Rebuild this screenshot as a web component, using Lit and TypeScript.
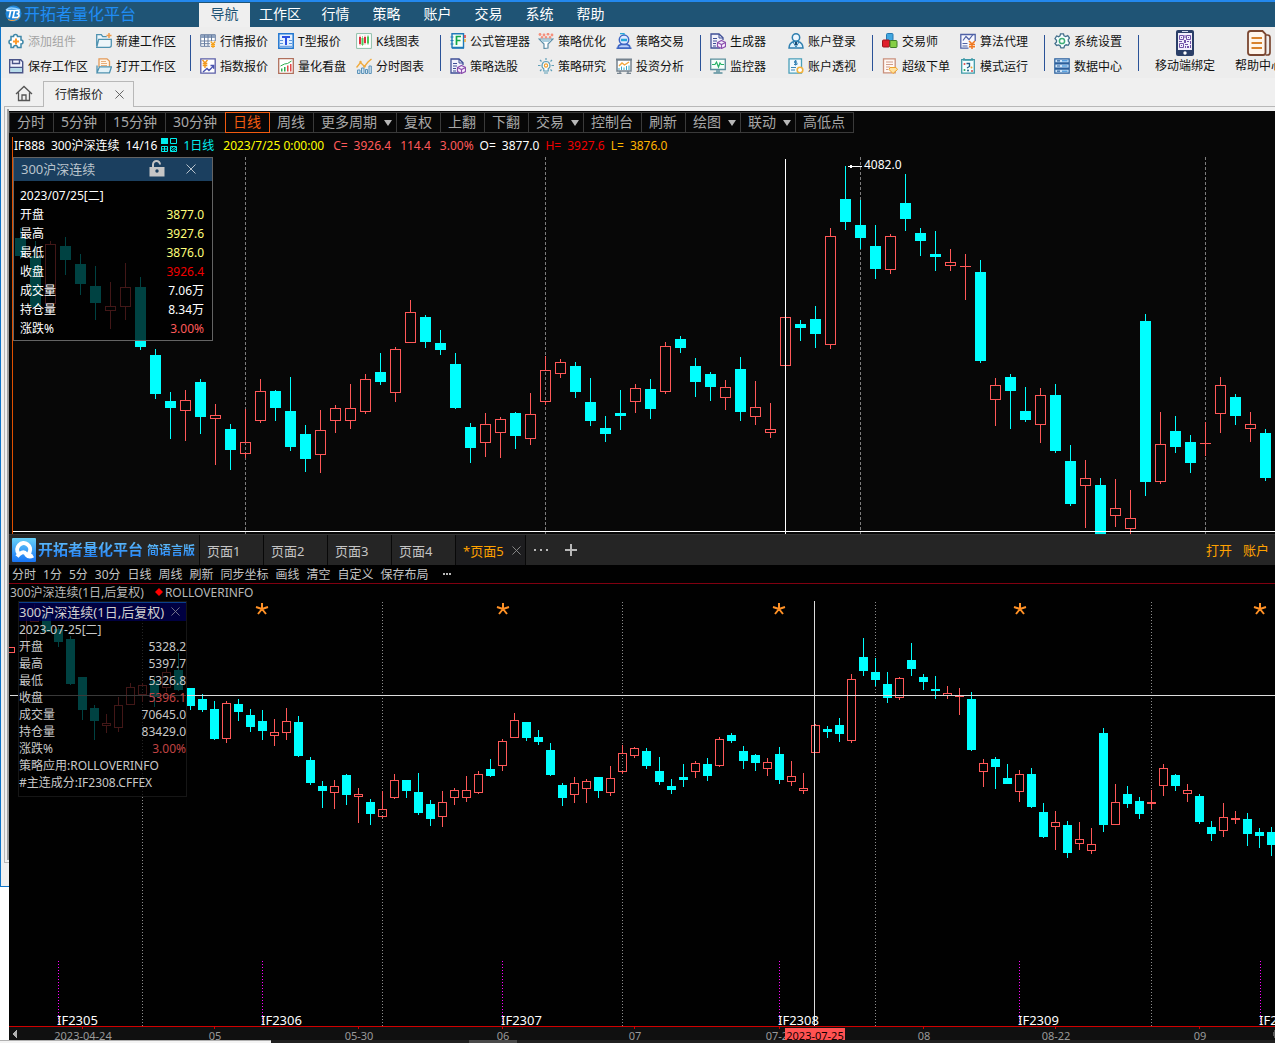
import { LitElement, html, svg, css, nothing } from "lit";
import { customElement, property } from "lit/decorators.js";
import { classMap } from "lit/directives/class-map.js";

/* ---------- icons ---------- */

const ICONS: Record<string, unknown> = {
  addWidget: svg`<path d="M3 3.500h2.500a2 2 0 1 1 4 0H13v3.500a2 2 0 1 1 0 4V14.500H9.500a2 2 0 1 0-4 0H3V11a2 2 0 1 1 0-4z" fill="#fff" stroke="#3f87a8" stroke-width="1.500"/><path d="M8 5.500v6M5 8.500h6" stroke="#ff9a2a" stroke-width="2"/>`,
  newWorkspace: svg`<path d="M.7 13V1.700h4.600l1.400 2h4M.7 14.300l2-8h12.600v6q0 2-2 2z" fill="#eef6fa" stroke="#4f92b0" stroke-width="1.300"/><path d="M13 0v5M10.500 2.500h5" stroke="#ee9a4a" stroke-width="1.500"/>`,
  save: svg`<path d="M1.700 1.700h11l2 2v11H1.700z" fill="#f4f4ff" stroke="#4a5488" stroke-width="1.400"/><path d="M4.500 2v3.500h7V2M2 9.500h12.500" fill="none" stroke="#4a5488" stroke-width="1.400"/><path d="M2.500 10h11.500v4H2.500z" fill="#b8dcea"/>`,
  openWorkspace: svg`<path d="M3 9V.8h8l2.500 2.500V9" fill="#fff5e8" stroke="#e29a5a" stroke-width="1.300"/><path d="M5 3.500h5M5 5.500h6M5 7.500h6" stroke="#e8ae7a"/><path d="M1 14.800V7.500M1 14.800h12.500l2-6H3.500z" fill="#e3f2f8" stroke="#4f92b0" stroke-width="1.300"/>`,
  quoteTable: svg`<path d="M.7 1.700h14.600v11.600H.7z" fill="#fff" stroke="#687ea0"/><path d="M1 2h14v3H1z" fill="#8fa3c0"/><path d="M1 8h14M1 10.700h14M4.500 2v11M8 2v11M11.500 2v11" stroke="#687ea0"/><path d="M10 8h6v7h-6z" fill="#efefef"/><path d="M10.700 8.500 13 11l2.300-2.500M13 11v4M11 11.700h4M11 13.300h4" fill="none" stroke="#f6a21c" stroke-width="1.200"/>`,
  tQuote: svg`<path d="M.8.8h14.400v14.400H.8z" fill="#e4f0ff" stroke="#2277d0" stroke-width="1.500"/><path d="M4 4h8M8 4v8" stroke="#2b50e0" stroke-width="2"/><path d="M2 7.500h3M2 10.500h3M2 13.300h12M11 7.500h3M11 10.500h3" stroke="#5a94dc"/>`,
  kChart: svg`<path d="M.6.6h14.800v14.800H.6z" fill="#fff" stroke="#8fbfa8"/><path d="M3 4h2v7H3zM8 4h2v6H8z" fill="#e03040"/><path d="M5.500 5h2v7h-2zM11 3.500h2v7h-2z" fill="#4cc85a"/><path d="M4 2.500v10M9 2.500v9" stroke="#e03040" stroke-width=".600"/><path d="M6.500 3v10M12 2v10" stroke="#4cc85a" stroke-width=".600"/>`,
  indexQuote: svg`<path d="M.8.8h14.400v14.400H.8z" fill="#fff" stroke="#5b5fa8" stroke-width="1.300"/><path d="M2.500 2 5 5l2.500-3M5 5v5M2.700 5.500h4.600M2.700 7.500h4.600" fill="none" stroke="#f09a20" stroke-width="1.400"/><path d="m3 14 4-3.500 2 2L13.500 8M10.500 7.500h3.200v3.200" fill="none" stroke="#4b55b0" stroke-width="1.400"/>`,
  quantBoard: svg`<path d="M.7.7h14.600v14.600H.7z" fill="#fff" stroke="#b0705c" stroke-width="1.300"/><path d="M3 13.500v-3h1.500v3zM6 13.500V9h1.500v4.500z" fill="#2fae52"/><path d="M9 13.500V7.500h1.500v6zM12 13.500V6h1.500v7.500z" fill="#e04a4a"/><path d="m2.500 8 4-2 3-.5L13.500 3" fill="none" stroke="#2fae52"/>`,
  tickChart: svg`<path d="M1.500 15.500V12H4v3.500zM5.500 15.500V10H8v5.500zM9.500 15.500V11.500h2v4zM13 15.500V8h2.300v7.500z" fill="#cfe4f4" stroke="#5c93b8"/><path d="m.5 9.500 4-5 4 4 3.500-4.500 3.500-3" fill="none" stroke="#f0aa3c" stroke-width="1.400"/><circle cx="4.500" cy="4" r="1.200" fill="#f0aa3c"/><circle cx="8.500" cy="8.500" r="1.200" fill="#f0aa3c"/>`,
  formula: svg`<path d="M2 .8h11.500v13.700H2z" fill="#f4fff8" stroke="#1f7ab8" stroke-width="1.400"/><path d="M.5 4h3M.5 7.500h3M.5 11h3" stroke="#1f7ab8" stroke-width="1.200"/><path d="M6.500 12V3.500H11M6.500 7.500h4" fill="none" stroke="#12a84a" stroke-width="1.700"/><path d="M15 2v3" stroke="#e03838" stroke-width="1.500"/><path d="M15 6v3" stroke="#f3a62a" stroke-width="1.500"/><path d="M2 15.300h12" stroke="#1f7ab8"/>`,
  funnel: svg`<path d="M1 6h14l-5 5v4l-4 .5V11z" fill="#fff" stroke="#5f8fa8" stroke-width="1.200"/><path d="M3 7h10l-2 2H5z" fill="#a9cfe0"/><circle cx="2" cy="1.500" r="1.400" fill="#f5907c"/><circle cx="6" cy="2" r="1.400" fill="#f5907c"/><circle cx="10" cy="1.200" r="1.400" fill="#f5907c"/><circle cx="14" cy="2" r="1.400" fill="#f5907c"/><circle cx="4" cy="4.300" r="1.200" fill="#f5907c"/><circle cx="8" cy="4.300" r="1.200" fill="#f5907c"/><circle cx="12" cy="4.300" r="1.200" fill="#f5907c"/>`,
  robot: svg`<circle cx="8" cy="6.800" r="4.700" fill="#dfe9ff" stroke="#3e66c4" stroke-width="1.500"/><path d="M5 7h6" stroke="#26a6d8" stroke-width="2.500"/><path d="M8 2V.5H4" fill="none" stroke="#26a6d8" stroke-width="1.300"/><path d="M2 15q0-3 3-3.500h6q3 .5 3 3.500zM.5 15.200h15" fill="#bcd0f8" stroke="#3e66c4" stroke-width="1.400"/>`,
  docCube: svg`<path d="M10 15H1V1h8l4 3.700V7" fill="#f1f1fb" stroke="#3f4f96" stroke-width="1.300"/><path d="M9 1v4h4M3 5.500h4M3 8h4M3 10.500h3M3 13h3" fill="none" stroke="#3f4f96"/><path d="m11.500 7.500 4 2v4l-4 2-4-2v-4zM7.500 9.500l4 2 4-2M11.500 11.500v4" fill="#fbefff" stroke="#8b4fae" stroke-width="1.200"/>`,
  bulb: svg`<path d="M8 3.500a4 4 0 0 1 2.200 7.300V13H5.800v-2.200A4 4 0 0 1 8 3.500z" fill="#fff" stroke="#5f9fb8" stroke-width="1.200"/><path d="M6 15h4M8 0v2M2 2l1.500 1.500M14 2l-1.500 1.500M0 7.500h2.500M16 7.500h-2.500M2 13l1.500-1.500M14 13l-1.500-1.500" stroke="#5f9fb8" stroke-width="1.200"/><circle cx="8" cy="7.500" r="1.600" fill="#fff" stroke="#f0a030" stroke-width="1.200"/>`,
  invest: svg`<path d="M0 1.500h16" stroke="#75838f" stroke-width="2"/><path d="M1 2h14v11H1z" fill="#fff" stroke="#75838f" stroke-width="1.500"/><path d="m3 8 3-3 2.500 2L13 4" fill="none" stroke="#f2a63c" stroke-width="1.400"/><path d="M3 10v2M5.500 8.500v3.500M8 9.500v2.500M10.500 8v4M13 7.500v4.500" stroke="#39a9c9"/><path d="M4 13v2.500M12 13v2.500M1 15.300h4.500M10.500 15.300h4.500" stroke="#75838f" stroke-width="1.300"/>`,
  monitor: svg`<path d="M.7 1.200h14.600v10.300H.7z" fill="#f6fffb" stroke="#5a8f9c" stroke-width="1.300"/><path d="M2 6.500h3l1.500-2.500 2 5L10 5l1.200 1.500H14" fill="none" stroke="#25b267" stroke-width="1.200"/><path d="M6 12h4v2.500H6z" fill="#7fa8b2"/><path d="M3.500 15h9" stroke="#5a8f9c" stroke-width="1.500"/>`,
  user: svg`<circle cx="8" cy="4.500" r="3.700" fill="#eef7ff" stroke="#2f7fb0" stroke-width="1.500"/><path d="M1 15q0-5 5-6.500h4q5 1.500 5 6.500z" fill="#e3f2fc" stroke="#2f7fb0" stroke-width="1.500"/><path d="M8 9v3" stroke="#204a70" stroke-width="2"/><path d="m5 9 3 5 3-5" fill="none" stroke="#2f7fb0"/>`,
  userDoc: svg`<path d="M1 .8h12.500v14.400H1z" fill="#f1faff" stroke="#4b9fb8" stroke-width="1.300"/><path d="M7.500 2v5.500M9 3.200H6.500v1.600H9v1.700H6M3 9.500h5M3 12h4" fill="none" stroke="#3a86b8"/><circle cx="12" cy="12" r="2.800" fill="#fff" stroke="#f2b23c" stroke-width="1.600"/>`,
  cubes: svg`<rect x="4.500" y=".5" width="6.500" height="7" rx="1" fill="#41a7e0" stroke="#2679b0"/><rect x=".5" y="7" width="7" height="7" rx="1" fill="#e0202c" stroke="#9c141c"/><rect x="8" y="7.500" width="7" height="7" rx="1" fill="#86cf46" stroke="#3f7d28"/>`,
  trader: svg`<path d="M1.500.8h11.700v14H1.500z" fill="#fff8f4" stroke="#c9907c" stroke-width="1.300"/><path d="M4 4h7M4 6.500h7M4 9h4M4 11.500h2" stroke="#d09c8a"/><path d="M8 9.500h6l1.500 2-4.500 4-4-4z" fill="#ffe2a0" stroke="#eea22c"/>`,
  algo: svg`<path d="M.8 1.500h14.400v13.700H.8z" fill="#f7f8ff" stroke="#4f62a6" stroke-width="1.300"/><path d="m3 7.500 3-4 3 3 4-5" fill="none" stroke="#4f62a6" stroke-width="1.200"/><path d="M2.500 10.500h5M2.500 13h5" stroke="#4f62a6"/><path d="M8.500 8H16v8H8.500z" fill="#f4f4f4"/><path d="M9 8l3 3 3-3M12 11v5M9 11.500h6M9 13.700h6" fill="none" stroke="#f07820" stroke-width="1.500"/>`,
  modeRun: svg`<path d="M1.700 1.700h12.600v13.500H1.700z" fill="#f4feff" stroke="#3f9aa8" stroke-width="1.300"/><path d="M4 0v3M12 0v3M5 2h6" stroke="#3f9aa8" stroke-width="1.300"/><path d="M6.500 5.500h3v3L7 10" fill="none" stroke="#245f86" stroke-width="1.300"/><circle cx="4.500" cy="6" r="1" fill="#e04a4a"/><circle cx="11.500" cy="9.500" r="1" fill="#f0a030"/><circle cx="4.500" cy="12" r="1" fill="#29a85c"/><circle cx="8" cy="12.500" r="1" fill="#245f86"/><circle cx="12" cy="13" r="1" fill="#e04a4a"/>`,
  gear: svg`<path d="M6.500.8h3l.5 2 1.700.8 2-1 1.800 2.400-1.300 1.600.2 1.800 1.300 1.300-1.500 2.600-2-.5-1.600 1-.7 2h-3l-.8-2-1.500-.9-2 .5L1 10.500l1.500-1.500V7.200L1 5.600 2.600 3l2 .7L6 2.800z" fill="#f7ffff" stroke="#44708c" stroke-width="1.300"/><circle cx="8" cy="8" r="2.600" fill="#fff" stroke="#3fae78" stroke-width="1.500"/>`,
  server: svg`<path d="M.8.8h14.400v4H.8zM.8 6h14.400v4H.8zM.8 11.200h14.400v4H.8z" fill="#cfe6fa" stroke="#2a5f9c" stroke-width="1.200"/><path d="M3 2.800h3M3 8h3M3 13.200h3" stroke="#2a5f9c" stroke-width="1.200"/><path d="M8 2.800h5.500M8 8h5.500M8 13.200h5.500" stroke="#5aa2e0" stroke-width="1.500"/>`,
};

const icon = (name: string) =>
  html`<svg class="icon" viewBox="0 0 16 16" aria-hidden="true">${ICONS[name]}</svg>`;

const crossIcon = html`<svg class="cross" viewBox="0 0 10 10" aria-hidden="true"><path d="M.5.500l9 9M9.500.500l-9 9" stroke="currentColor" fill="none" /></svg>`;

const phoneIcon = html`<svg class="big-icon" viewBox="0 0 26 26" aria-hidden="true">
  <rect x="4" y="0" width="18" height="26" rx="2" fill="#2b3f68" />
  <path d="M6 3h14v17H6z" fill="#f2eefb" />
  <path d="M10 1.500h6" stroke="#d0d8e8" />
  <circle cx="13" cy="23" r="1.700" fill="#fff" />
  <path d="M7.500 5.500h4v4h-4zM14.500 5.500h4v4h-4zM7.500 13.500h4v4h-4z" fill="none" stroke="#7253a8" />
  <path d="M9 7h1v1H9zM16 7h1v1h-1zM9 15h1v1H9zM12.500 5h1v3h-1zM7 11h3v1H7zM12 10h2v3h-2zM15 11h2v1h-2zM18 11h1v3h-1zM13 14h3v1h-3zM13 16h1v2h-1zM15 16h2v2h-2zM18 15h1v3h-1z" fill="#7253a8" />
</svg>`;

const docsIcon = html`<svg class="big-icon" viewBox="0 0 26 26" aria-hidden="true">
  <path d="M20 5h1.500q2.500 0 2.500 2.500v15q0 2.500-2.500 2.500h-2" fill="none" stroke="#7a4630" stroke-width="1.700" />
  <path d="M4.500 1h12l3 3v18.500q0 2.500-2.500 2.500H4.500Q2 25 2 22.500v-19Q2 1 4.500 1z" fill="#fff6ec" stroke="#7a4630" stroke-width="1.800" />
  <path d="M5.500 8h10.500M5.500 13h10.500M5.500 18h10.500" stroke="#d8822c" stroke-width="1.800" />
</svg>`;

/* ---------- chart data: [rising, high, body top, body bottom, low] ---------- */

type Candle = [0 | 1, number, number, number, number];

const DAILY: Candle[] = [
  [0, 228, 238, 256, 259], [0, 241, 256, 307, 308], [1, 241, 244, 304, 305], [0, 237, 246, 260, 275],
  [0, 254, 264, 284, 295], [0, 266, 286, 303, 320], [1, 282, 306, 311, 329], [1, 263, 287, 307, 320],
  [0, 277, 287, 347, 350], [0, 349, 355, 394, 399], [0, 392, 401, 408, 439], [1, 390, 400, 411, 441],
  [0, 379, 382, 417, 434], [1, 404, 415, 419, 465], [0, 424, 429, 450, 470], [1, 409, 442, 454, 458],
  [1, 379, 391, 421, 423], [0, 390, 391, 408, 421], [0, 377, 411, 447, 451], [0, 425, 434, 459, 472],
  [1, 410, 430, 455, 473], [1, 405, 408, 421, 433], [1, 384, 408, 421, 429], [1, 374, 379, 412, 414],
  [0, 353, 372, 382, 385], [1, 347, 349, 393, 402], [1, 300, 312, 343, 343], [0, 315, 317, 342, 348],
  [0, 330, 343, 350, 355], [0, 353, 364, 408, 409], [0, 423, 427, 448, 463], [1, 413, 424, 443, 457],
  [1, 417, 419, 433, 458], [0, 412, 413, 436, 449], [1, 393, 414, 439, 445], [1, 356, 370, 402, 405],
  [1, 359, 362, 374, 378], [0, 362, 366, 392, 398], [0, 378, 402, 421, 426], [0, 416, 428, 434, 442],
  [0, 390, 413, 416, 430], [1, 384, 388, 402, 413], [0, 379, 389, 409, 419], [1, 342, 346, 392, 394],
  [0, 336, 339, 348, 353], [0, 358, 366, 382, 397], [0, 372, 374, 387, 401], [1, 380, 387, 398, 410],
  [0, 357, 369, 412, 421], [1, 381, 407, 417, 425], [1, 403, 429, 433, 438], [1, 317, 317, 366, 366],
  [0, 320, 324, 328, 341], [0, 306, 319, 334, 348], [1, 228, 236, 345, 349], [0, 166, 199, 222, 230],
  [0, 200, 225, 238, 249], [0, 225, 246, 269, 279], [1, 234, 236, 270, 274], [0, 174, 203, 219, 231],
  [0, 228, 233, 241, 256], [0, 231, 254, 257, 271], [1, 249, 262, 266, 271], [1, 254, 266, 267, 300],
  [0, 260, 272, 361, 363], [1, 378, 385, 400, 426], [0, 374, 377, 391, 429], [0, 387, 411, 420, 422],
  [1, 388, 395, 425, 443], [0, 384, 395, 451, 453], [0, 445, 461, 504, 506], [1, 460, 478, 486, 528],
  [0, 478, 485, 535, 535], [1, 479, 508, 516, 527], [1, 490, 518, 529, 534], [0, 314, 321, 482, 496],
  [1, 412, 444, 482, 484], [0, 416, 431, 447, 453], [0, 435, 442, 463, 473], [1, 422, 443, 444, 456],
  [1, 377, 385, 414, 433], [0, 394, 397, 416, 425], [1, 412, 424, 429, 442], [0, 429, 433, 478, 481],
];

const ADJUSTED: Candle[] = [
  [1, 647, 647, 653, 653], [1, 615, 615, 648, 648], [1, 604, 610, 622, 622], [0, 610, 613, 632, 632],
  [0, 627, 629, 642, 647], [0, 636, 639, 684, 685], [0, 677, 677, 710, 720], [0, 705, 708, 721, 740],
  [1, 714, 723, 726, 733], [1, 697, 705, 728, 732], [1, 683, 687, 705, 705], [1, 683, 685, 695, 702],
  [0, 677, 681, 697, 707], [1, 668, 672, 688, 692], [0, 653, 670, 690, 691],
  [0, 688, 688, 706, 710], [0, 694, 699, 710, 712], [0, 701, 709, 739, 740], [1, 701, 703, 739, 743],
  [0, 699, 704, 712, 721], [0, 709, 715, 727, 732], [0, 710, 721, 731, 740], [1, 719, 732, 736, 746],
  [1, 708, 721, 733, 740], [0, 716, 722, 756, 757], [0, 757, 760, 783, 785], [0, 781, 786, 791, 808],
  [1, 780, 786, 793, 809], [0, 774, 775, 795, 805], [1, 788, 794, 797, 823], [0, 799, 802, 814, 825],
  [1, 791, 809, 817, 818], [1, 774, 780, 798, 799], [0, 780, 780, 791, 798], [0, 773, 792, 813, 815],
  [0, 800, 804, 819, 826], [1, 791, 802, 817, 827], [1, 788, 790, 798, 805], [1, 776, 790, 798, 802],
  [1, 771, 774, 793, 794], [0, 759, 769, 776, 777], [1, 739, 741, 766, 771], [1, 713, 720, 738, 738],
  [0, 722, 722, 738, 741], [0, 730, 737, 742, 745], [0, 743, 750, 775, 776], [0, 783, 785, 798, 806],
  [1, 777, 783, 795, 803], [1, 779, 781, 789, 803], [0, 777, 777, 791, 798], [1, 766, 778, 793, 796],
  [1, 745, 753, 772, 774], [1, 747, 748, 756, 758], [0, 748, 751, 766, 769], [0, 757, 771, 782, 785],
  [0, 779, 786, 790, 794], [0, 764, 777, 780, 787], [1, 761, 763, 772, 778], [0, 758, 764, 776, 781],
  [1, 737, 739, 766, 767], [0, 733, 735, 741, 743], [0, 746, 751, 761, 769], [0, 754, 755, 763, 771],
  [1, 758, 762, 769, 776], [0, 747, 754, 780, 784], [1, 761, 776, 782, 786], [1, 773, 788, 791, 794],
  [1, 724, 725, 753, 753], [0, 726, 729, 732, 738], [0, 718, 725, 734, 742], [1, 674, 679, 741, 743],
  [0, 638, 657, 671, 676], [0, 658, 672, 680, 686], [0, 672, 684, 698, 703], [1, 677, 678, 698, 700],
  [0, 643, 660, 669, 676], [0, 674, 677, 682, 690], [0, 676, 689, 691, 699], [1, 686, 693, 696, 699],
  [1, 688, 695, 697, 715], [0, 692, 699, 750, 751], [1, 759, 763, 772, 787], [0, 757, 759, 767, 789],
  [0, 764, 778, 784, 784], [1, 770, 774, 792, 802], [0, 768, 774, 807, 808], [0, 803, 812, 837, 838],
  [1, 811, 822, 827, 850], [0, 821, 825, 853, 858], [1, 822, 839, 844, 850], [1, 828, 844, 851, 854],
  [0, 728, 733, 825, 832], [1, 784, 802, 825, 825], [0, 786, 794, 804, 808], [0, 797, 801, 814, 819],
  [1, 790, 802, 804, 809], [1, 764, 768, 786, 796], [0, 774, 775, 786, 791], [1, 784, 790, 794, 802],
  [0, 794, 796, 822, 824], [0, 821, 827, 834, 841], [1, 803, 817, 831, 837], [1, 811, 818, 820, 824],
  [0, 813, 819, 834, 846], [0, 828, 832, 836, 848], [0, 827, 832, 845, 856],
];

const candle = (c: Candle, x: number, half: number) => {
  const [rising, high, top, bottom, low] = c;
  if (!rising) {
    return svg`<path fill="#00ffff" d="M${x} ${high}h1v${low - high}h-1zM${x - half} ${top}h${2 * half + 1}v${bottom - top}h-${2 * half + 1}z"/>`;
  }
  if (bottom - top < 3) {
    return svg`<path fill="#ff5858" d="M${x} ${high}h1v${low - high}h-1zM${x - half} ${top}h${2 * half + 1}v${bottom - top}h-${2 * half + 1}z"/>`;
  }
  return svg`<path fill="none" stroke="#ff5858" d="M${x + 0.5} ${high}V${top}M${x + 0.5} ${bottom}V${low}M${x - half + 0.5} ${top + 0.5}h${2 * half}v${bottom - top - 1}h-${2 * half}z"/>`;
};

@customElement("daily-chart")
export class DailyChart extends LitElement {
  static styles = css`
    :host { display: block; }
    .plot { display: block; width: 100%; height: 379px; shape-rendering: crispEdges; }
    .price { font: 12px "Noto Sans", "Noto Sans CJK SC", sans-serif; fill: #fff; }
  `;
  render() {
    return html`<svg class="plot" role="img" aria-label="300沪深连续 日线">
      <g transform="translate(-13 -155)">
        ${[245, 545, 860, 1205].map((x) => svg`<path d="M${x + 0.5} 157V534" stroke="#7c7c7c" stroke-dasharray="3 2"/>`)}
        ${DAILY.map((c, i) => candle(c, 20 + i * 15, 5))}
        <path d="M785.500 159V534M13 531.500H4000" stroke="#fff" fill="none" />
        <path d="M848 166.500h14M850 165.500h2M850 167.500h2" stroke="#fff" fill="none" />
        <text class="price" x="864" y="169">4082.0</text>
      </g>
    </svg>`;
  }
}

@customElement("adjusted-chart")
export class AdjustedChart extends LitElement {
  static styles = css`
    :host { display: block; }
    .plot { display: block; width: 100%; height: 440px; shape-rendering: crispEdges; }
    .contract { font: 13px "Noto Sans", sans-serif; fill: #fff; }
    .date { font: 11px "Noto Sans", sans-serif; fill: #999; text-anchor: middle; }
    .now { fill: #100; }
    .star { fill: none; stroke: #ff9126; stroke-width: 2; shape-rendering: auto; }
  `;
  render() {
    const contracts: [number, string][] = [
      [58, "IF2305"], [262, "IF2306"], [502, "IF2307"], [779, "IF2308"], [1019, "IF2309"], [1260, "IF2310"],
    ];
    const dates: [number, string][] = [
      [82, "2023-04-24"], [214, "05"], [358, "05-30"], [502, "06"], [634, "07"],
      [779, "07-20"], [923, "08"], [1055, "08-22"], [1199, "09"],
    ];
    return html`<svg class="plot" role="img" aria-label="300沪深连续 后复权">
      <g transform="translate(-9 -600)">
        <rect x="9" y="1027" width="100%" height="13" fill="#101010" />
        ${[142, 382, 622, 875, 1151].map((x) => svg`<path d="M${x + 0.5} 602V1026" stroke="#8c8c8c" stroke-dasharray="1 2"/>`)}
        ${ADJUSTED.map((c, i) => candle(c, 190 + Math.round((i - 15) * 12.013), 4))}
        ${[262, 503, 779, 1020, 1260].map(
          (x) => svg`<path class="star" d="M${x} 609V603M${x} 609l-6-2M${x} 609l6-2M${x} 609l-4 5M${x} 609l4 5"/>`
        )}
        <path d="M10 695.500H4000M814.500 601V1026" stroke="#dcdcdc" fill="none" />
        ${contracts.map(
          ([x, name]) => svg`<path d="M${x + 0.5} 961V1022" stroke="#ff00ff" stroke-dasharray="1 2"/>
            <text class="contract" x=${x - 1} y="1025">${name}</text>`
        )}
        <path d="M9 1026.500H4000" stroke="#d00000" />
        ${dates.map(
          ([x, label]) => svg`<path d="M${x + 0.5} 1027v2" stroke="#d00000"/>
            <text class="date" x=${x + 1} y="1040">${label}</text>`
        )}
        <rect x="785" y="1028" width="60" height="12" fill="#ff5252" />
        <text class="date now" x="815" y="1040">2023-07-25</text>
        <path d="M17 1030v8l-5-4z" fill="#b0b0b0" />
        <circle cx="1279" cy="1034" r="6" fill="#5a5a5a" />
      </g>
    </svg>`;
  }
}

/* ---------- floating data card ---------- */

type Row = [string, string, string];

@customElement("bar-card")
export class BarCard extends LitElement {
  static styles = css`
    :host { display: block; font: 12px "Noto Sans", "Noto Sans CJK SC", sans-serif; }
    .card { color: #fff; background: rgba(0, 0, 0, 0.74); border: 1px solid #646464; box-sizing: border-box; }
    .head { display: flex; align-items: center; box-sizing: border-box; height: 23px; padding: 0 16px 2px 7px; background: #1b3f5f; color: #b9c3cc; font-size: 13px; }
    .name { flex: 1; white-space: nowrap; }
    .lock { width: 16px; height: 17px; margin-right: 21px; display: block; }
    .close { display: block; padding: 0; border: 0; background: none; color: inherit; height: 10px; line-height: 0; }
    .cross { display: block; width: 10px; height: 10px; }
    .date { margin: 0; padding: 5px 6px 0; line-height: 19px; }
    .rows { margin: 0; padding: 0 8px 2px 6px; }
    .row { display: flex; justify-content: space-between; line-height: 19px; }
    .row dd { margin: 0; }
    .yellow { color: #ffff7a; }
    .red { color: #f00000; }
    .coral { color: #ff5a5a; }
    .dim { color: #c04444; }
    .note { margin: 0; line-height: 17px; white-space: nowrap; }
    .compact { color: #c8c8c8; border-color: #161616; padding-bottom: 5px; }
    .compact .head { height: 19px; padding: 0 6px 2px 0; background: rgba(0, 0, 92, 0.7); color: #d0d0d0; border-top: 1px solid #0a3f8c; }
    .compact .close { color: #7c7c90; }
    .compact .cross { width: 9px; height: 9px; }
    .compact .date { padding: 0; line-height: 17px; }
    .compact .rows { padding: 0; }
    .compact .row { line-height: 17px; }
  `;
  @property() name = "";
  @property() date = "";
  @property({ type: Boolean }) compact = false;
  @property({ attribute: false }) rows: Row[] = [];
  @property({ attribute: false }) notes: string[] = [];

  render() {
    return html`<section class=${classMap({ card: true, compact: this.compact })}>
      <header class="head">
        <span class="name">${this.name}</span>
        ${this.compact
          ? nothing
          : html`<svg class="lock" viewBox="0 0 16 17" aria-hidden="true">
              <path d="M4 7V4.500a3.500 3.500 0 0 1 7 0" fill="none" stroke="#c6c6c6" stroke-width="2" />
              <path d="M.500 7h15v9.500H.500z" fill="#c6c6c6" />
              <circle cx="8" cy="11" r="1.700" fill="#1b3f5f" />
            </svg>`}
        <button class="close" type="button" aria-label="关闭">${crossIcon}</button>
      </header>
      <p class="date">${this.date}</p>
      <dl class="rows">
        ${this.rows.map(([label, value, tone]) => html`<div class="row"><dt>${label}</dt><dd class=${tone}>${value}</dd></div>`)}
      </dl>
      ${this.notes.map((n) => html`<p class="note">${n}</p>`)}
    </section>`;
  }
}

/* ---------- page ---------- */

interface RibbonColumn { wide?: boolean; items: [string, string][]; }

const RIBBON: RibbonColumn[][] = [
  [
    { wide: true, items: [["addWidget", "添加组件"], ["save", "保存工作区"]] },
    { wide: true, items: [["newWorkspace", "新建工作区"], ["openWorkspace", "打开工作区"]] },
  ],
  [
    { items: [["quoteTable", "行情报价"], ["indexQuote", "指数报价"]] },
    { items: [["tQuote", "T型报价"], ["quantBoard", "量化看盘"]] },
    { items: [["kChart", "K线图表"], ["tickChart", "分时图表"]] },
  ],
  [
    { wide: true, items: [["formula", "公式管理器"], ["docCube", "策略选股"]] },
    { items: [["funnel", "策略优化"], ["bulb", "策略研究"]] },
    { items: [["robot", "策略交易"], ["invest", "投资分析"]] },
  ],
  [
    { items: [["docCube", "生成器"], ["monitor", "监控器"]] },
    { items: [["user", "账户登录"], ["userDoc", "账户透视"]] },
  ],
  [
    { items: [["cubes", "交易师"], ["trader", "超级下单"]] },
    { items: [["algo", "算法代理"], ["modeRun", "模式运行"]] },
  ],
  [{ items: [["gear", "系统设置"], ["server", "数据中心"]] }],
];

const PERIODS: [string, boolean?][] = [
  ["分时"], ["5分钟"], ["15分钟"], ["30分钟"], ["日线"], ["周线"], ["更多周期", true], ["复权"], ["上翻"],
  ["下翻"], ["交易", true], ["控制台"], ["刷新"], ["绘图", true], ["联动", true], ["高低点"],
];

@customElement("app-root")
export class AppRoot extends LitElement {
  static styles = css`
    :host { display: block; overflow: hidden; background: #fff; color: #111; font: 12px "Noto Sans", "Noto Sans CJK SC", sans-serif; }
    button { font: inherit; color: inherit; background: none; border: 0; padding: 0; margin: 0; white-space: nowrap; }
    .icon { width: 16px; height: 16px; flex: none; display: block; }
    .cross { width: 9px; height: 9px; display: block; }

    .titlebar { display: flex; height: 25px; background: #1f5475; border-top: 2px solid #2388ee; }
    .brand { display: flex; align-items: center; gap: 2px; width: 194px; box-sizing: content-box; padding: 0 0 3px 5px; height: 22px; color: #1f8df5; font-size: 16px; white-space: nowrap; }
    .brand-mark { width: 17px; height: 17px; flex: none; }
    .menu { display: flex; color: #fff; font-size: 14px; padding-top: 1px; }
    .menu-item { min-width: 51px; padding: 0 9px 6px; height: 24px; }
    .menu-item.on { background: #efefef; color: #1f5475; }

    .ribbon { display: flex; align-items: center; height: 50px; padding: 1px 0 0 7px; background: #ededed; border-left: 1px solid #0e74c8; }
    .group { display: flex; gap: 10px; padding-right: 16px; flex: none; }
    .column { display: flex; flex-direction: column; width: 68px; }
    .column.wide { width: 78px; }
    .tool { display: flex; align-items: center; gap: 4px; height: 25px; }
    .tool:disabled { color: #a4a4a4; }
    .rule { width: 1px; height: 36px; margin-right: 9px; background: #2a5298; flex: none; }
    .big { display: flex; flex-direction: column; align-items: center; width: 74px; height: 46px; flex: none; line-height: 17px; }
    .big-icon { width: 26px; height: 26px; display: block; margin-bottom: 1px; }

    .tabs { background: #f0f0f0; border-left: 1px solid #0e74c8; padding: 3px 0 0 3px; }
    .tab-line { display: flex; height: 25px; border-bottom: 1px solid #b8b8b8; }
    .home { width: 39px; display: grid; place-items: center; }
    .home-icon { width: 18px; height: 17px; display: block; }
    .tab { display: flex; align-items: center; gap: 12px; height: 26px; width: 91px; box-sizing: border-box; padding: 0 8px 2px 11px; border: 1px solid #b8b8b8; border-bottom: 0; background: #f0f0f0; color: #222; }
    .tab .close { color: #555; padding-top: 2px; }

    .workspace { display: grid; grid-template-columns: 9px minmax(0, 1fr); }
    .rail { height: 780px; box-sizing: border-box; background: #f0f0f0; border-left: 1px solid #0e74c8; border-bottom: 1px solid #0e74c8; padding-left: 3px; }
    .rail-outer { height: 756px; box-sizing: border-box; border-left: 1px solid #b8b8b8; border-bottom: 1px solid #b8b8b8; padding: 2px 0 2px 2px; }
    .rail-inner { height: 100%; box-sizing: border-box; border: 1px solid #a0a0a0; border-right: 0; background: #9a9a9a; }
    .frame-top { height: 1px; background: #f0f0f0; border-top: 2px solid #f0f0f0; border-bottom: 1px solid #a0a0a0; }

    .board { background: #070707; border-top: 1px solid #f0f0f0; color: #fff; margin-top: -1px; position: relative; }
    .periods { display: flex; padding: 1px 0 4px 1px; color: #a8a8a8; font-size: 14px; }
    .period { display: flex; align-items: center; box-sizing: border-box; height: 21px; padding: 0 8px 3px 7px; border: 1px solid #3a3a3a; margin-left: -1px; }
    .period.more { gap: 7px; padding-right: 4px; }
    .period.more::after { content: ""; margin-top: 3px; border: 4px solid transparent; border-top: 6px solid #b8b8b8; border-bottom: 0; }
    .period.on { color: #f05a10; border-color: #f05a10; position: relative; }
    .pane { position: relative; margin-left: 3px; border-left: 1px solid #e05000; }
    .quote { display: flex; align-items: center; gap: 6px; box-sizing: border-box; height: 18px; padding: 0 0 2px 1px; white-space: nowrap; }
    .grid-icon { width: 16px; height: 16px; display: block; margin-left: -2px; }
    .gap { margin-left: 3px; }
    .cyan { color: #00f0f0; }
    .yellow { color: #ffff00; }
    .coral { color: #ff5a5a; }
    .red { color: #f00000; }
    .gold { color: #ffb400; }
    .float-top { position: absolute; left: 0; top: 20px; width: 200px; }

    .second { background: #010101; color: #c4c4c4; }
    .bar { display: flex; align-items: center; height: 30px; background: #252525; border-top: 1px solid #343434; font-size: 13px; }
    .bar-logo { display: flex; align-items: center; width: 190px; height: 30px; box-sizing: border-box; padding: 0 0 1px 3px; white-space: nowrap; font-weight: 700; }
    .bar-mark { width: 24px; height: 24px; flex: none; margin-right: 2px; }
    .bar-name { font-size: 15px; background: linear-gradient(#6cc8f8, #1c7cf8); -webkit-background-clip: text; background-clip: text; color: transparent; margin: 0 4px 3px 0; }
    .bar-sub { font-size: 12px; background: linear-gradient(#6cc8f8, #1c7cf8); -webkit-background-clip: text; background-clip: text; color: transparent; }
    .page { height: 30px; width: 64px; box-sizing: border-box; border-left: 1px solid #080808; padding-left: 7px; text-align: left; }
    .page.on { display: flex; align-items: center; width: 71px; gap: 8px; background: #1d1d1f; color: #ffa200; border-right: 1px solid #080808; }
    .page.on .cross { color: #909090; }
    .bar-more { width: 16px; height: 4px; margin-left: 8px; line-height: 0; }
    .bar-plus { width: 12px; height: 12px; margin-left: 15px; line-height: 0; }
    .bar-icon { display: block; width: 100%; height: 100%; }
    .links { display: flex; gap: 11px; margin-left: auto; padding: 0 6px 2px 0; }
    .links a { color: #ffa200; text-decoration: none; }
    .commands { display: flex; align-items: center; gap: 7px; height: 18px; padding-left: 3px; border-bottom: 1px solid #800010; }
    .commands .dots { width: 9px; height: 2px; margin-left: 7px; }
    .legend { display: flex; align-items: center; height: 16px; padding-left: 1px; color: #b8b8b8; white-space: nowrap; }
    .diamond { width: 8px; height: 8px; margin: 0 2px 0 11px; display: block; }
    .plot-area { position: relative; }
    .float-low { position: absolute; left: 9px; top: 1px; width: 169px; }

    .strip { display: flex; height: 3px; background: #202020; }
    .strip-light { width: 271px; height: 2px; background: #f4f4f4; border-top: 1px solid #b0b0b0; }
    .thumb { width: 48px; margin-left: 198px; background: #4a4a4a; }
  `;

  render() {
    return html`
      <header class="titlebar">
        <div class="brand">
          <svg class="brand-mark" viewBox="0 0 17 17" aria-hidden="true">
            <circle cx="8.500" cy="8.500" r="8" fill="#1f86d8" />
            <path d="M1 5q4-4 14 0" fill="none" stroke="#8fd0ff" stroke-width="1.500" />
            <path d="M1.500 5.500h8M5.700 5.500l-1.500 7M9.500 5.500l-1.500 7h3.500q2.500 0 2.500-2t-2.500-1.800q2.500 0 2.500-1.700t-2-1.500z" fill="none" stroke="#fff" stroke-width="1.700" />
            <path d="M3 14.500q6 3 11-2" fill="none" stroke="#f5a040" />
          </svg>
          <span>开拓者量化平台</span>
        </div>
        <nav class="menu">
          ${["导航", "工作区", "行情", "策略", "账户", "交易", "系统", "帮助"].map(
            (m, i) => html`<button type="button" class=${classMap({ "menu-item": true, on: i === 0 })}>${m}</button>`
          )}
        </nav>
      </header>

      <div class="ribbon">
        ${RIBBON.map(
          (g) => html`<div class="group">
              ${g.map(
                (c) => html`<div class=${classMap({ column: true, wide: !!c.wide })}>
                  ${c.items.map(
                    ([i, label]) => html`<button type="button" class="tool" ?disabled=${label === "添加组件"}>${icon(i)}<span>${label}</span></button>`
                  )}
                </div>`
              )}
            </div>
            <div class="rule"></div>`
        )}
        <button type="button" class="big">${phoneIcon}<span>移动端绑定</span></button>
        <button type="button" class="big">${docsIcon}<span>帮助中心</span></button>
      </div>

      <div class="tabs">
        <div class="tab-line">
          <button type="button" class="home" aria-label="首页">
            <svg class="home-icon" viewBox="0 0 18 17" aria-hidden="true">
              <path d="M1 9 9 1.500 17 9M3.500 7.500v8h11v-8M7 15.500V10h4v5.500" fill="none" stroke="#555" stroke-width="1.300" />
            </svg>
          </button>
          <div class="tab">
            <span>行情报价</span>
            <button type="button" class="close" aria-label="关闭标签">${crossIcon}</button>
          </div>
        </div>
      </div>

      <main class="workspace">
        <div>
          <div class="rail"><div class="rail-outer"><div class="rail-inner"></div></div></div>
        </div>
        <div>
          <div class="frame-top"></div>
          <section class="board">
            <nav class="periods">
              ${PERIODS.map(
                ([p, more]) => html`<button type="button" class=${classMap({ period: true, more: !!more, on: p === "日线" })}>${p}</button>`
              )}
            </nav>
            <div class="pane">
              <div class="quote">
                <span>IF888</span><span>300沪深连续</span><span>14/16</span>
                <svg class="grid-icon" viewBox="0 0 16 16" aria-hidden="true">
                  <path d="M0 1h7v6H0z" fill="#00f0f0" />
                  <path d="M9.500 1.500h6v5h-6zM.500 9.500h6v5h-6zM3.500 9.500v5M.500 12h6M9.500 9.500h6v5h-6zM10 14l5-4M12 14.500l3.500-3M9.500 12l3-2.500" fill="none" stroke="#00f0f0" />
                </svg>
                <span class="cyan">1日线</span>
                <span class="yellow gap">2023/7/25 0:00:00</span>
                <span class="coral gap">C=</span><span class="coral">3926.4</span>
                <span class="coral gap">114.4</span><span class="coral gap">3.00%</span>
                <span>O=</span><span>3877.0</span>
                <span class="red">H=</span><span class="red">3927.6</span>
                <span class="gold">L=</span><span class="gold">3876.0</span>
              </div>
              <daily-chart></daily-chart>
              <bar-card
                class="float-top"
                name="300沪深连续"
                date="2023/07/25[二]"
                .rows=${[
                  ["开盘", "3877.0", "yellow"], ["最高", "3927.6", "yellow"], ["最低", "3876.0", "yellow"],
                  ["收盘", "3926.4", "red"], ["成交量", "7.06万", ""], ["持仓量", "8.34万", ""], ["涨跌%", "3.00%", "coral"],
                ] as Row[]}
              ></bar-card>
            </div>
          </section>

          <section class="second">
            <div class="bar">
              <div class="bar-logo">
                <svg class="bar-mark" viewBox="0 0 24 24" aria-hidden="true">
                  <defs><linearGradient id="m" x2="0" y2="1"><stop stop-color="#66d0f8" /><stop offset="1" stop-color="#1874f4" /></linearGradient></defs>
                  <rect width="24" height="24" rx="1" fill="url(#m)" />
                  <path d="M6.500 15.500a6.500 6.500 0 1 1 11-1q-1 2.500-3 2-2-3-4.500-2t-5 4M14 16.500q3 3.500 7 1" fill="none" stroke="#fff" stroke-width="4" />
                </svg>
                <span class="bar-name">开拓者量化平台</span><span class="bar-sub">简语言版</span>
              </div>
              ${[1, 2, 3, 4].map((n) => html`<button type="button" class="page">页面${n}</button>`)}
              <button type="button" class="page on"><span>*页面5</span>${crossIcon}</button>
              <button type="button" class="bar-more" aria-label="更多页面">
                <svg class="bar-icon" viewBox="0 0 16 4" aria-hidden="true"><path d="M0 1h2v2H0zM6 1h2v2H6zM12 1h2v2h-2z" fill="#b8b8b8" /></svg>
              </button>
              <button type="button" class="bar-plus" aria-label="新建页面">
                <svg class="bar-icon" viewBox="0 0 12 12" aria-hidden="true"><path d="M5 0h2v5h5v2H7v5H5V7H0V5h5z" fill="#b8b8b8" /></svg>
              </button>
              <div class="links"><a href="#open">打开</a><a href="#account">账户</a></div>
            </div>
            <nav class="commands">
              ${["分时", "1分", "5分", "30分", "日线", "周线", "刷新", "同步坐标", "画线", "清空", "自定义", "保存布局"].map(
                (c) => html`<button type="button">${c}</button>`
              )}
              <button type="button" class="dots" aria-label="更多">
                <svg class="bar-icon" viewBox="0 0 9 2" aria-hidden="true"><path d="M0 0h2v2H0zM3 0h2v2H3zM6 0h2v2H6z" fill="#b8b8b8" /></svg>
              </button>
            </nav>
            <div class="legend">
              <span>300沪深连续(1日,后复权)</span>
              <svg class="diamond" viewBox="0 0 8 8" aria-hidden="true"><path d="M4 0l4 4-4 4-4-4z" fill="#f00" /></svg>
              <span>ROLLOVERINFO</span>
            </div>
            <div class="plot-area">
              <adjusted-chart></adjusted-chart>
              <bar-card
                class="float-low"
                compact
                name="300沪深连续(1日,后复权)"
                date="2023-07-25[二]"
                .rows=${[
                  ["开盘", "5328.2", ""], ["最高", "5397.7", ""], ["最低", "5326.8", ""], ["收盘", "5396.1", "dim"],
                  ["成交量", "70645.0", ""], ["持仓量", "83429.0", ""], ["涨跌%", "3.00%", "dim"],
                ] as Row[]}
                .notes=${["策略应用:ROLLOVERINFO", "#主连成分:IF2308.CFFEX"]}
              ></bar-card>
            </div>
          </section>
        </div>
      </main>
      <footer class="strip"><div class="strip-light"></div><div class="thumb"></div></footer>
    `;
  }
}
